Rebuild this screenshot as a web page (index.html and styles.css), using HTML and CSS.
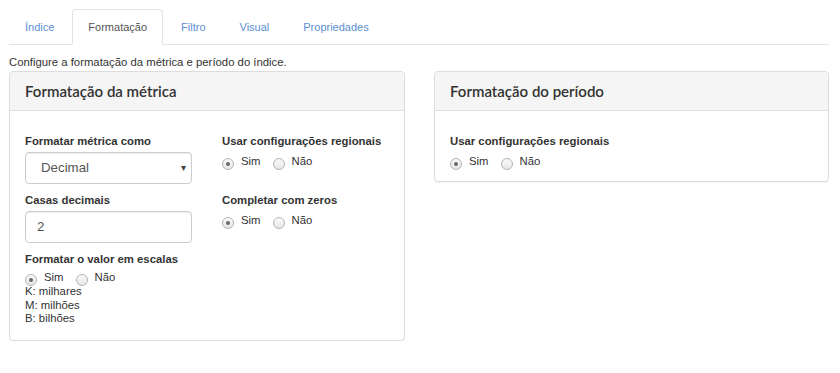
FILE: index.html
```html
<!DOCTYPE html>
<html lang="pt-BR">
<head>
<meta charset="UTF-8">
<meta name="viewport" content="width=device-width, initial-scale=1.0">
<title>Formatação</title>
<link rel="stylesheet" href="styles.css">
</head>
<body>

<div class="page">
    <ul class="nav-tabs">
        <li><a href="#">Índice</a></li>
        <li class="active"><a href="#">Formatação</a></li>
        <li><a href="#">Filtro</a></li>
        <li><a href="#">Visual</a></li>
        <li><a href="#">Propriedades</a></li>
    </ul>

    <p class="help">Configure a formatação da métrica e período do índice.</p>

    <div class="columns">
        <div class="panel">
            <div class="panel-heading">Formatação da métrica</div>
            <div class="panel-body">
                <div class="grid">
                    <div class="col">
                        <div class="form-group">
                            <label class="field-label">Formatar métrica como</label>
                            <div class="select">Decimal <span class="caret">▾</span></div>
                        </div>
                        <div class="form-group">
                            <label class="field-label">Casas decimais</label>
                            <div class="text-input">2</div>
                        </div>
                        <div class="form-group">
                            <label class="field-label">Formatar o valor em escalas</label>
                            <div class="radios tight">
                                <span class="radio checked"><i></i>Sim</span>
                                <span class="radio"><i></i>Não</span>
                            </div>
                            <div class="scales">
                                K: milhares<br>
                                M: milhões<br>
                                B: bilhões
                            </div>
                        </div>
                    </div>
                    <div class="col">
                        <div class="form-group">
                            <label class="field-label">Usar configurações regionais</label>
                            <div class="radios">
                                <span class="radio checked"><i></i>Sim</span>
                                <span class="radio"><i></i>Não</span>
                            </div>
                        </div>
                        <div class="form-group second">
                            <label class="field-label">Completar com zeros</label>
                            <div class="radios">
                                <span class="radio checked"><i></i>Sim</span>
                                <span class="radio"><i></i>Não</span>
                            </div>
                        </div>
                    </div>
                </div>
            </div>
        </div>

        <div class="panel">
            <div class="panel-heading">Formatação do período</div>
            <div class="panel-body short">
                <label class="field-label">Usar configurações regionais</label>
                <div class="radios">
                    <span class="radio checked"><i></i>Sim</span>
                    <span class="radio"><i></i>Não</span>
                </div>
            </div>
        </div>
    </div>
</div>

</body>
</html>
```

FILE: styles.css
```css
body {
    font-family: "Liberation Sans", Arial, sans-serif;
    font-size: 11.33px;
    color: #333;
    background-color: #fff;
    margin: 0;
    padding: 0;
}

.page {
    padding: 9px 11px 0 9px;
}

/* tabs */

.nav-tabs {
    list-style: none;
    margin: 0;
    padding: 0;
    display: flex;
    border-bottom: 1px solid #e3e3e3;
}

.nav-tabs li {
    margin-bottom: -1px;
}

.nav-tabs a {
    display: block;
    height: 35px;
    box-sizing: border-box;
    padding: 10px 15px 0;
    font-size: 11px;
    line-height: 14px;
    color: #5a8fd2;
    text-decoration: none;
    border: 1px solid transparent;
    border-radius: 4px 4px 0 0;
    margin-right: 2px;
}

.nav-tabs .active a {
    color: #555;
    background-color: #fff;
    border-color: #e3e3e3;
    border-bottom-color: #fff;
    height: 36px;
}

.help {
    margin: 10px 0 2px;
    line-height: 14px;
    color: #333;
}

/* panels */

.columns {
    display: grid;
    grid-template-columns: 396px 395px;
    column-gap: 29px;
    align-items: start;
}

.panel {
    border: 1px solid #ddd;
    border-radius: 4px;
    box-shadow: 0 1px 1px rgba(0, 0, 0, 0.05);
    background-color: #fff;
}

.panel-heading {
    font-family: Lato, "Liberation Sans", sans-serif;
    font-size: 15px;
    font-weight: 600;
    color: #333;
    background-color: #f5f5f5;
    border-bottom: 1px solid #e0e0e0;
    border-radius: 3px 3px 0 0;
    padding: 10px 15px;
    line-height: 18px;
}

.panel-body {
    padding: 23px 15px 14px;
}

.panel-body.short {
    padding-bottom: 9px;
}

.grid {
    display: grid;
    grid-template-columns: 167px 1fr;
    column-gap: 30px;
}

.form-group {
    margin-bottom: 9px;
}

.form-group:last-child {
    margin-bottom: 0;
}

.col .second {
    margin-top: 21px;
}

.field-label {
    display: block;
    font-weight: bold;
    line-height: 14px;
    margin-bottom: 4px;
}

.select,
.text-input {
    height: 32px;
    box-sizing: border-box;
    border: 1px solid #ccc;
    border-radius: 4px;
    box-shadow: inset 0 1px 1px rgba(0, 0, 0, 0.075);
    font-size: 13.3px;
    line-height: 30px;
    color: #555;
}

.select {
    position: relative;
    padding-left: 15px;
}

.select .caret {
    position: absolute;
    right: 5px;
    top: 0;
    font-size: 10px;
    color: #444;
}

.text-input {
    padding-left: 11px;
}

/* radios */

.radios {
    display: flex;
    height: 20px;
    padding-top: 2px;
    box-sizing: border-box;
}

.radios.tight {
    padding-top: 0;
}

.radio {
    display: flex;
    align-items: flex-start;
    line-height: 14px;
    margin-right: 12px;
}

.radio i {
    display: block;
    width: 10px;
    height: 10px;
    margin: 4px 7px 0 0;
    border: 1px solid #b5b5b5;
    border-radius: 50%;
    background: linear-gradient(#fafafa, #e6e6e6);
    position: relative;
}

.radio.checked i::after {
    content: "";
    position: absolute;
    left: 3px;
    top: 3px;
    width: 4px;
    height: 4px;
    border-radius: 50%;
    background-color: #6a6a6a;
}

.form-group .scales {
    margin-top: -5px;
    line-height: 13.5px;
}
```
